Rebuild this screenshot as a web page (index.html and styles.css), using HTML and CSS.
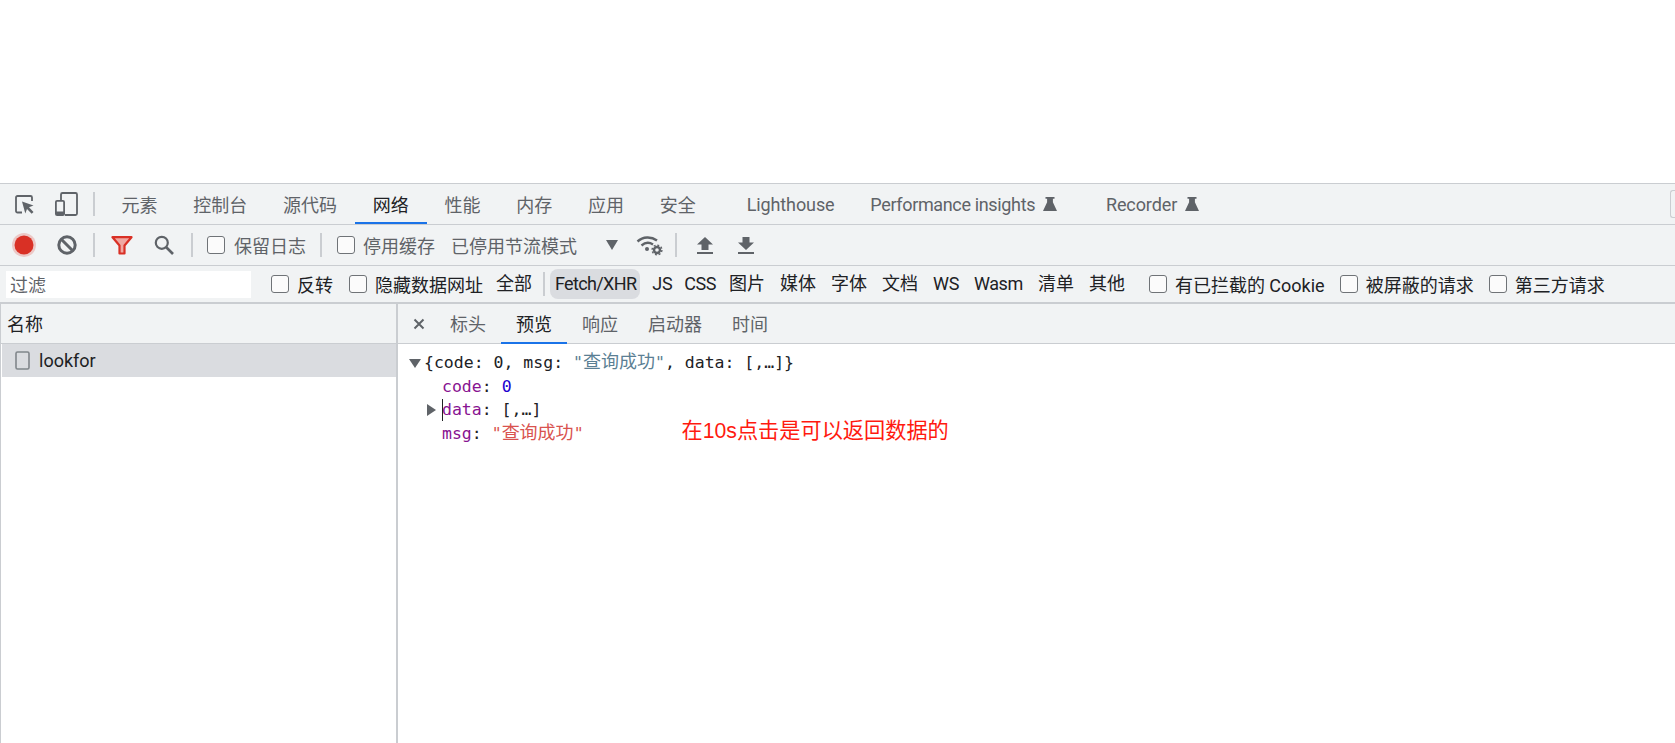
FILE: index.html
```html
<!DOCTYPE html>
<html lang="zh-CN">
<head>
<meta charset="utf-8">
<title>DevTools</title>
<link rel="stylesheet" href="styles.css">
</head>
<body>
<div class="page-top"></div>
<div class="devtools">
  <div class="bar tabs-bar">
    <svg class="ic ic-inspect" width="20" height="19" viewBox="0 0 20 19"><path d="M7 17.500H2.500a1.500 1.500 0 0 1-1.500-1.500V2.500A1.500 1.500 0 0 1 2.500 1h13A1.500 1.500 0 0 1 17 2.500V6" fill="none" stroke="#5f6368" stroke-width="1.800"/><path d="M7 6.500l11.500 4-4.500 1.800 4.500 4.700-1.800 1.700-4.700-4.800-1.700 4.500z" fill="#5f6368"/></svg>
    <svg class="ic ic-device" width="24" height="24" viewBox="0 0 24 24"><path d="M7 8V2.500A1.500 1.500 0 0 1 8.500 1h13A1.500 1.500 0 0 1 23 2.500v19a1.500 1.500 0 0 1-1.500 1.500H11" fill="none" stroke="#5f6368" stroke-width="1.800"/><rect x="1.900" y="8.900" width="8.200" height="14.200" rx="1.200" fill="none" stroke="#5f6368" stroke-width="1.800"/><rect x="2" y="19.500" width="8" height="3.500" fill="#5f6368"/></svg>
    <span class="sep sep-tabs"></span>
    <span class="tab">元素</span>
    <span class="tab">控制台</span>
    <span class="tab">源代码</span>
    <span class="tab tab-on">网络</span>
    <span class="tab">性能</span>
    <span class="tab">内存</span>
    <span class="tab">应用</span>
    <span class="tab">安全</span>
    <span class="tab tab-far">Lighthouse</span>
    <span class="tab tab-tight">Performance insights<svg class="flask" width="16" height="16" viewBox="0 0 16 16"><path d="M3.500 1h9v1.800h-1.600v3.500L15 15H1l4.100-8.700V2.800H3.500z" fill="#5f6368"/></svg></span>
    <span class="tab tab-far2">Recorder<svg class="flask" width="16" height="16" viewBox="0 0 16 16"><path d="M3.500 1h9v1.800h-1.600v3.500L15 15H1l4.100-8.700V2.800H3.500z" fill="#5f6368"/></svg></span>
    <span class="corner-box"></span>
  </div>
  <div class="bar net-bar">
    <svg class="ic ic-record" width="26" height="26" viewBox="0 0 26 26"><circle cx="13" cy="13" r="12" fill="#d93025" opacity=".22"/><circle cx="13" cy="13" r="9.500" fill="#d93025"/></svg>
    <svg class="ic ic-block" width="20" height="20" viewBox="0 0 20 20"><circle cx="10" cy="10" r="8.200" fill="none" stroke="#5f6368" stroke-width="3"/><path d="M4 4l12 12" stroke="#5f6368" stroke-width="3"/></svg>
    <span class="sep sep-a"></span>
    <svg class="ic ic-filter" width="22" height="19" viewBox="0 0 22 19"><path d="M1.500 1.200h19L13.500 9.500v8h-5v-8z" fill="#f0a8a2" stroke="#d93025" stroke-width="2.200" stroke-linejoin="round"/></svg>
    <svg class="ic ic-search" width="20" height="20" viewBox="0 0 20 20"><circle cx="7.800" cy="7.800" r="6" fill="none" stroke="#5f6368" stroke-width="2.200"/><path d="M12 12l7 7" stroke="#5f6368" stroke-width="2.600"/></svg>
    <span class="sep sep-b"></span>
    <label class="check check-log"><span class="box"></span>保留日志</label>
    <span class="sep sep-c"></span>
    <label class="check check-cache"><span class="box"></span>停用缓存</label>
    <span class="throttle">已停用节流模式</span>
    <span class="caret"></span>
    <svg class="ic ic-wifi" width="27" height="21" viewBox="0 0 27 21"><path d="M1.500 6.500C7 1.500 15 1.200 21 5.500M5.500 10.500c3.500-3 8-3.200 11.500-1" fill="none" stroke="#5f6368" stroke-width="2.400"/><circle cx="11" cy="14" r="2" fill="#5f6368"/><circle cx="21" cy="15" r="3" fill="none" stroke="#5f6368" stroke-width="2.400"/><circle cx="21" cy="15" r="4.900" fill="none" stroke="#5f6368" stroke-width="1.400" stroke-dasharray="2 1.800"/></svg>
    <span class="sep sep-d"></span>
    <svg class="ic ic-up" width="16" height="17" viewBox="0 0 16 17"><path d="M8 0l8 7.500h-4.500V13h-7V7.500H0z" fill="#5f6368"/><rect y="15" width="16" height="2" fill="#5f6368"/></svg>
    <svg class="ic ic-down" width="16" height="17" viewBox="0 0 16 17"><path d="M8 13L0 5.500h4.500V0h7v5.500H16z" fill="#5f6368"/><rect y="15" width="16" height="2" fill="#5f6368"/></svg>
  </div>
  <div class="bar filter-bar">
    <div class="filter-input">过滤</div>
    <label class="check check-inv"><span class="box"></span>反转</label>
    <label class="check check-hide"><span class="box"></span>隐藏数据网址</label>
    <span class="type type-all">全部</span>
    <span class="sep sep-e"></span>
    <span class="type type-on latin">Fetch/XHR</span>
    <span class="type latin type-js">JS</span>
    <span class="type latin type-css">CSS</span>
    <span class="type">图片</span>
    <span class="type">媒体</span>
    <span class="type">字体</span>
    <span class="type">文档</span>
    <span class="type latin">WS</span>
    <span class="type latin">Wasm</span>
    <span class="type">清单</span>
    <span class="type">其他</span>
    <label class="check check-cookie"><span class="box"></span>有已拦截的 Cookie</label>
    <label class="check check-blocked"><span class="box"></span>被屏蔽的请求</label>
    <label class="check check-third"><span class="box"></span>第三方请求</label>
  </div>
  <div class="panes">
    <div class="list-pane">
      <div class="list-head">名称</div>
      <div class="list-row">
        <svg class="file-ic" width="15" height="19" viewBox="0 0 15 19"><rect x="1" y="1" width="13" height="17" rx="1.500" fill="none" stroke="#80868b" stroke-width="1.600"/></svg>
        <span>lookfor</span>
      </div>
    </div>
    <div class="detail-pane">
      <div class="detail-tabs">
        <svg class="close" width="12" height="12" viewBox="0 0 12 12"><path d="M1.500 1.500l9 9M10.500 1.500l-9 9" stroke="#5f6368" stroke-width="2"/></svg>
        <span class="dtab">标头</span>
        <span class="dtab dtab-on">预览</span>
        <span class="dtab">响应</span>
        <span class="dtab">启动器</span>
        <span class="dtab">时间</span>
      </div>
      <div class="preview">
        <div class="tree-line root"><span class="tri tri-down"></span>{code: 0, msg: <span class="str-dim">"<span class="cjk">查询成功</span>"</span>, data: [,…]}</div>
        <div class="tree-line child"><span class="key">code</span>: <span class="num">0</span></div>
        <div class="tree-line child"><span class="tri tri-right"></span><span class="caret-mark"></span><span class="key">data</span>: [,…]</div>
        <div class="tree-line child msg-line"><span><span class="key">msg</span>: <span class="str">"<span class="cjk">查询成功</span>"</span></span><span class="note">在10s点击是可以返回数据的</span></div>
      </div>
    </div>
  </div>
</div>
</body>
</html>
```

FILE: styles.css
```css
* { box-sizing: border-box; }
html, body { margin: 0; padding: 0; height: 743px; overflow: hidden; background: #fff; }
body { font-family: "Roboto", "Noto Sans CJK SC", sans-serif; font-size: 18px; color: #202124; }
.page-top { height: 183px; }
.devtools { height: 560px; display: flex; flex-direction: column; border-top: 1px solid #cacdd1; }
.bar { display: flex; align-items: center; background: #f1f3f4; border-bottom: 1px solid #cacdd1; flex: none; white-space: nowrap; }
.tabs-bar { height: 41px; align-items: stretch; padding-left: 15px; }
.net-bar { height: 41px; }
.filter-bar { height: 38px; border-bottom-width: 2px; }
.ic { flex: none; display: block; }
.sep { flex: none; width: 2px; height: 24px; background: #cacdd1; }
.ic-inspect { align-self: center; }
.ic-device { align-self: center; margin-left: 19px; }
.sep-tabs { align-self: center; margin-left: 15px; }
.tab { display: flex; align-items: center; padding: 2px 17.900px 0; color: #5f6368; border-bottom: 2px solid transparent; }
.sep-tabs + .tab { margin-left: 8.500px; }
.tab-on { color: #202124; border-bottom-color: #1a73e8; }
.tab-far { margin-left: 15px; letter-spacing: -0.100px; }
.tab-tight { letter-spacing: -0.350px; }
.tab-far2 { margin-left: 12px; letter-spacing: -0.100px; }
.flask { margin-left: 7px; }
.corner-box { position: absolute; left: 1670px; top: 190px; width: 6px; height: 28px; border: 1px solid #cacdd1; border-right: 0; border-radius: 3px 0 0 3px; }
.ic-record { margin-left: 11px; }
.ic-block { margin-left: 20px; }
.sep-a { margin-left: 16px; }
.ic-filter { margin-left: 16px; }
.ic-search { margin-left: 21px; }
.sep-b { margin-left: 17px; }
.check { display: flex; align-items: center; color: #5f6368; }
.box { flex: none; width: 18px; height: 18px; border: 1.5px solid #6f7377; border-radius: 3px; background: #fbfbfb; margin-right: 9px; }
.check-log { margin-left: 14px; }
.sep-c { margin-left: 14px; }
.check-cache { margin-left: 15px; }
.check-cache .box { margin-right: 8px; }
.throttle { margin-left: 16px; color: #5f6368; }
.caret { width: 0; height: 0; margin-left: 29px; border-left: 6px solid transparent; border-right: 6px solid transparent; border-top: 10px solid #5f6368; }
.ic-wifi { margin-left: 18px; }
.sep-d { margin-left: 12px; }
.ic-up { margin-left: 20px; }
.ic-down { margin-left: 25px; }
.filter-input { width: 245px; height: 27px; margin-left: 6px; padding-left: 4px; line-height: 29px; background: #fff; color: #5f6368; }
.filter-bar .check { color: #202124; }
.filter-bar .box { margin-right: 8px; }
.check-inv { margin-left: 20px; }
.check-hide { margin-left: 16px; }
.type { padding: 0 5px; line-height: 30px; border-radius: 8px; margin-left: 5px; }
.latin { letter-spacing: -0.400px; }
.type-all { margin-left: 8px; }
.sep-e { margin-left: 6px; margin-right: 0; }
.type-on { margin-left: 5px; padding-right: 4px; background: #dadce0; letter-spacing: -0.650px; }
.type-js { margin-left: 7px; padding-right: 2px; }
.type-css { padding-right: 3px; }
.check-cookie { margin-left: 19px; }
.check-blocked { margin-left: 15px; }
.check-third { margin-left: 15px; }
.panes { flex: 1; display: flex; min-height: 0; }
.list-pane { flex: none; width: 398px; border-left: 1px solid #cacdd1; border-right: 2px solid #cacdd1; padding-left: 1px; }
.list-head { height: 40px; line-height: 42px; padding-left: 6px; margin-left: -1px; background: #f1f3f4; border-bottom: 1px solid #cacdd1; }
.list-row { height: 33px; display: flex; align-items: center; background: #dadce0; padding-left: 13px; }
.file-ic { margin-right: 9px; }
.detail-pane { flex: 1; display: flex; flex-direction: column; min-width: 0; }
.detail-tabs { height: 40px; display: flex; align-items: stretch; background: #f1f3f4; border-bottom: 1px solid #cacdd1; color: #5f6368; }
.close { align-self: center; margin-left: 15px; margin-right: 10px; }
.dtab { display: flex; align-items: center; padding: 0 15px 1px; border-bottom: 2px solid transparent; margin-bottom: -1px; }
.dtab-on { color: #202124; border-bottom-color: #1a73e8; }
.preview { padding: 7px 0 0 26px; font-family: "DejaVu Sans Mono", "Noto Sans CJK SC", monospace; font-size: 16.5px; line-height: 23.500px; color: #202124; }
.tree-line { position: relative; white-space: pre; }
.cjk { font-size: 18px; line-height: 1; }
.child { margin-left: 18px; }
.tri { position: absolute; width: 0; height: 0; }
.tri-down { left: -15px; top: 8px; border-left: 6px solid transparent; border-right: 6px solid transparent; border-top: 9px solid #5f6368; }
.tri-right { left: -15px; top: 6px; border-top: 6px solid transparent; border-bottom: 6px solid transparent; border-left: 9px solid #5f6368; }
.caret-mark { position: absolute; left: 0; top: 1px; width: 1px; height: 22px; background: #202124; }
.key { color: #881391; }
.num { color: #1c00cf; }
.str { color: #d9534f; }
.str-dim { color: #5b7f94; }
.msg-line { display: flex; }
.note { margin-left: 98px; margin-top: -3px; font-family: "Liberation Sans", "Noto Sans CJK SC", sans-serif; font-size: 21.200px; color: #ff1a0f; }
```
